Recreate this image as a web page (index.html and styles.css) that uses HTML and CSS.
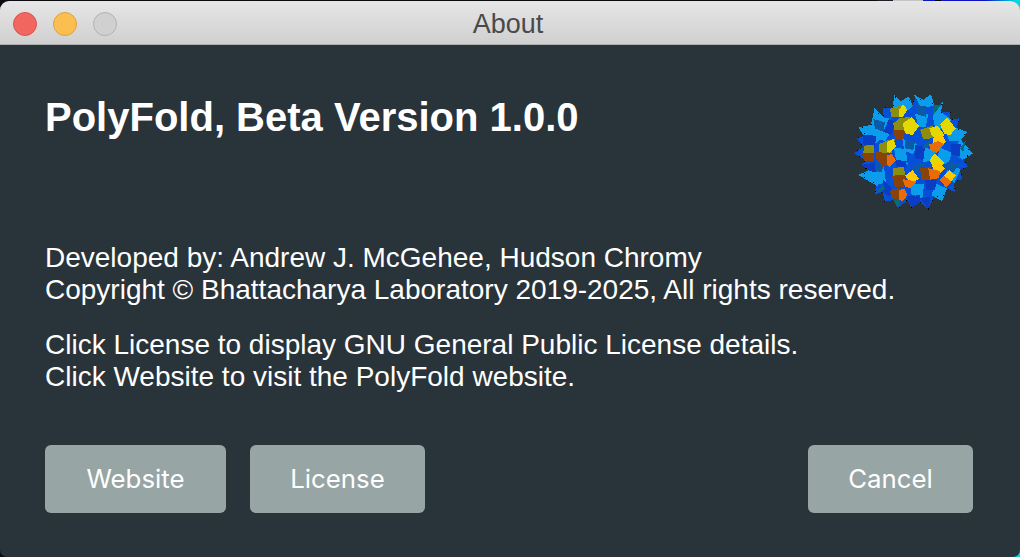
FILE: index.html
```html
<!DOCTYPE html>
<html lang="en">
<head>
    <meta charset="UTF-8">
    <title>About</title>
    <link rel="stylesheet" href="styles.css">
</head>
<body>
    <div class="window">
        <!-- Title bar -->
        <div class="titlebar">
            <div class="lights">
                <span class="light close"></span>
                <span class="light minimize"></span>
                <span class="light zoom"></span>
            </div>
            <span class="title">About</span>
        </div>

        <div class="content">
            <div class="top-row">
                <h1>PolyFold, Beta Version 1.0.0</h1>
                <svg class="logo" viewBox="33 15 375 375" shape-rendering="crispEdges">
                    <!-- spiky base -->
                    <polygon fill="#0650d8" points="165,35 183,52 205,38 216,62 228,35 250,47 272,32 280,60 305,58 300,82 332,80 330,105 358,100 350,130 378,142 360,165 395,205 368,222 385,245 358,255 368,282 342,290 345,320 318,312 305,345 285,328 265,372 240,352 215,368 202,345 174,370 160,345 135,350 128,322 105,328 108,298 60,270 88,258 65,240 78,225 42,205 70,185 50,160 78,150 60,129 95,122 105,75 130,100 130,68 160,70"/>

                    <!-- light tiles -->
                    <g class="tiles-light">
                        <polygon points="165,35 183,52 205,38 216,62 205,72 160,70"/>
                        <polygon points="105,75 130,100 150,100 135,128 95,122"/>
                        <polygon points="60,129 95,122 130,150 108,172 72,150"/>
                        <polygon points="228,35 250,47 272,32 280,60 245,68"/>
                        <polygon points="280,85 305,58 300,82 332,105 305,130 285,118"/>
                        <polygon points="340,128 378,142 360,165 330,165 322,145"/>
                        <polygon points="360,165 395,205 368,222 345,205"/>
                        <polygon points="190,165 228,178 218,205 195,195"/>
                        <polygon points="250,190 285,198 280,225 250,228"/>
                        <polygon points="300,190 332,205 322,238 295,225"/>
                        <polygon points="165,190 195,195 200,235 170,222"/>
                        <polygon points="88,258 130,250 135,290 108,298"/>
                        <polygon points="60,270 88,258 108,298"/>
                        <polygon points="215,298 250,298 245,338 215,325"/>
                        <polygon points="285,298 318,312 305,345 278,330"/>
                        <polygon points="325,232 358,255 342,290 322,262"/>
                        <polygon points="228,90 262,90 255,122 238,122"/>
                        <polygon points="120,125 150,140 135,165 112,160"/>
                    </g>

                    <!-- dark tiles -->
                    <g fill="#0a3cc4">
                        <polygon points="70,150 108,152 105,190 70,178"/>
                        <polygon points="165,225 200,228 195,250 170,245"/>
                        <polygon points="332,178 362,178 360,215 335,208"/>
                        <polygon points="225,180 255,185 250,225 225,220"/>
                        <polygon points="65,240 105,232 110,262 88,258"/>
                        <polygon points="200,335 240,330 240,352 215,368"/>
                        <polygon points="255,285 290,285 285,315 260,315"/>
                        <polygon points="130,285 155,310 150,335 128,322"/>
                        <polygon points="240,340 272,335 265,372"/>
                        <polygon points="148,100 165,110 155,150 130,140"/>
                    </g>

                    <!-- steel tiles -->
                    <g fill="#0a5aa8">
                        <polygon points="228,62 258,62 258,95 235,90"/>
                        <polygon points="100,102 135,112 130,140 105,130"/>
                        <polygon points="195,165 225,170 220,195 195,190"/>
                        <polygon points="105,235 130,240 125,262 105,258"/>
                        <polygon points="320,230 358,235 340,262 318,255"/>
                        <polygon points="220,240 255,235 248,268 225,262"/>
                    </g>

                    <!-- teal edges -->
                    <g fill="#0a6b78">
                        <polygon points="280,60 305,58 280,90"/>
                        <polygon points="105,328 130,300 135,312"/>
                        <polygon points="360,190 378,165 370,200"/>
                        <polygon points="245,190 268,165 265,188"/>
                        <polygon points="160,345 180,345 174,370"/>
                    </g>

                    <!-- raised cubes -->
                    <polygon fill="#8c8e10" points="150,72 190,58 202,75 178,97 155,97"/>
                    <polygon fill="#e4d800" points="178,72 190,58 202,75 188,97 178,97"/>

                    <polygon fill="#8c8e10" points="160,115 178,100 212,95 195,135 162,135"/>
                    <polygon fill="#8a4208" points="160,135 195,135 192,162 165,162"/>
                    <polygon fill="#e4d800" points="188,115 215,97 238,122 218,150 195,145"/>

                    <polygon fill="#e4d800" points="300,118 322,98 347,130 330,152 312,145"/>

                    <polygon fill="#8c8e10" points="240,135 278,122 278,160 250,162"/>
                    <polygon fill="#e4d800" points="268,130 292,122 314,150 295,168 275,150"/>
                    <polygon fill="#ffc800" points="278,160 305,148 318,170 295,188 280,175"/>
                    <polygon fill="#e86c08" points="268,178 295,168 312,178 290,204 270,195"/>

                    <polygon fill="#8c8e10" points="116,178 145,165 165,162 155,204 116,204"/>
                    <polygon fill="#e4d800" points="140,172 160,162 168,185 150,204 140,200"/>
                    <polygon fill="#8a4208" points="105,200 140,204 155,238 128,246 110,225"/>
                    <polygon fill="#e86c08" points="140,212 155,206 168,228 148,246 140,236"/>

                    <polygon fill="#8c8e10" points="72,182 102,180 102,205 70,205"/>
                    <polygon fill="#8a4208" points="65,205 102,205 100,228 72,228"/>

                    <polygon fill="#e4d800" points="268,225 285,205 314,235 295,250 280,245"/>
                    <polygon fill="#ffc800" points="275,240 295,232 316,250 300,265 282,258"/>
                    <polygon fill="#8a4208" points="240,250 272,245 275,285 245,285"/>
                    <polygon fill="#e86c08" points="265,250 302,258 295,280 270,284"/>

                    <polygon fill="#8c8e10" points="158,250 192,245 195,270 160,272"/>
                    <polygon fill="#8a4208" points="155,272 195,270 192,308 165,305"/>
                    <polygon fill="#ffc800" points="195,272 218,255 238,282 218,290 205,285"/>
                    <polygon fill="#e86c08" points="188,282 205,285 232,290 212,310 195,305"/>

                    <polygon fill="#ffc800" points="312,272 328,255 348,272 332,290"/>
                    <polygon fill="#e86c08" points="300,285 312,272 335,290 318,308"/>

                    <polygon fill="#8a4208" points="150,318 178,308 178,345 155,338"/>
                    <polygon fill="#e86c08" points="178,315 192,310 203,330 188,348 178,345"/>

                    <!-- black specks on the rim -->
                    <polygon fill="none" stroke="#000" stroke-width="3" stroke-dasharray="3 27" points="165,35 183,52 205,38 216,62 228,35 250,47 272,32 280,60 305,58 300,82 332,80 330,105 358,100 350,130 378,142 360,165 395,205 368,222 385,245 358,255 368,282 342,290 345,320 318,312 305,345 285,328 265,372 240,352 215,368 202,345 174,370 160,345 135,350 128,322 105,328 108,298 60,270 88,258 65,240 78,225 42,205 70,185 50,160 78,150 60,129 95,122 105,75 130,100 130,68 160,70"/>
                </svg>
            </div>

            <p class="credits">Developed by: Andrew J. McGehee, Hudson Chromy<br>Copyright © Bhattacharya Laboratory 2019-2025, All rights reserved.</p>
            <p class="hint">Click License to display GNU General Public License details.<br>Click Website to visit the PolyFold website.</p>

            <div class="buttons">
                <button class="btn btn-website">Website</button>
                <button class="btn btn-license">License</button>
                <button class="btn btn-cancel">Cancel</button>
            </div>
        </div>
    </div>
</body>
</html>
```

FILE: styles.css
```css
html, body {
    height: 100%;
}
body {
    margin: 0;
    overflow: hidden;
    padding-top: 1px;
    box-sizing: border-box;
    font-family: "Liberation Sans", Arial, sans-serif;
    background: linear-gradient(90deg, #0a0c10 0, #0a0c10 877px, #1c2026 877px, #1c2026 893px, #c4c4c4 893px, #c4c4c4 923px, #0a14c0 923px, #0a14c0 935px, #000 935px, #000 941px, #0a14c0 941px, #0a14c0 985px, #00d8e0 1015px);
}
.window {
    height: 556px;
    display: flex;
    flex-direction: column;
    background-color: #29333a;
    border-radius: 9px 9px 7px 7px;
    overflow: hidden;
}
.titlebar {
    height: 43px;
    flex: none;
    display: flex;
    align-items: center;
    justify-content: center;
    position: relative;
    background: linear-gradient(#e6e6e6, #d0d0d0);
    border-bottom: 1px solid #aeaeae;
}
.lights {
    position: absolute;
    left: 13px;
    top: 11px;
    display: flex;
    gap: 16px;
}
.light {
    width: 22px;
    height: 22px;
    border-radius: 50%;
    border: 1px solid;
}
.close {
    background-color: #f1675f;
    border-color: #d9534d;
}
.minimize {
    background-color: #fabf50;
    border-color: #dfa23c;
}
.zoom {
    background-color: #d0d0d0;
    border-color: #b2b2b2;
}
.title {
    font-size: 27px;
    color: #4a4a4a;
    padding: 3px 4px 0 0;
}
.content {
    flex: 1;
    padding: 0 47px 44px 45px;
    display: flex;
    flex-direction: column;
    color: white;
}
.top-row {
    display: flex;
    justify-content: space-between;
    align-items: flex-start;
}
h1 {
    margin: 50px 0 0;
    font-size: 40px;
    line-height: 44px;
    white-space: nowrap;
}
.logo {
    width: 125px;
    height: 125px;
    margin: 45px -3px 0 0;
    flex: none;
}
.tiles-light {
    fill: #0c9cec;
    stroke: #0c9cec;
    stroke-width: 5;
}
p {
    margin: 0;
    font-size: 28px;
    line-height: 32px;
}
.credits {
    margin-top: 27px;
}
.hint {
    margin-top: 23px;
}
.buttons {
    margin-top: auto;
    display: flex;
    gap: 24px;
}
.btn {
    height: 68px;
    border: none;
    border-radius: 6px;
    background-color: #98a5a5;
    color: white;
    font-family: Inter, sans-serif;
    font-size: 25.8px;
    padding: 0 0 2px;
}
.btn-website {
    width: 181px;
}
.btn-license {
    width: 175px;
}
.btn-cancel {
    width: 165px;
    margin-left: auto;
}
```
